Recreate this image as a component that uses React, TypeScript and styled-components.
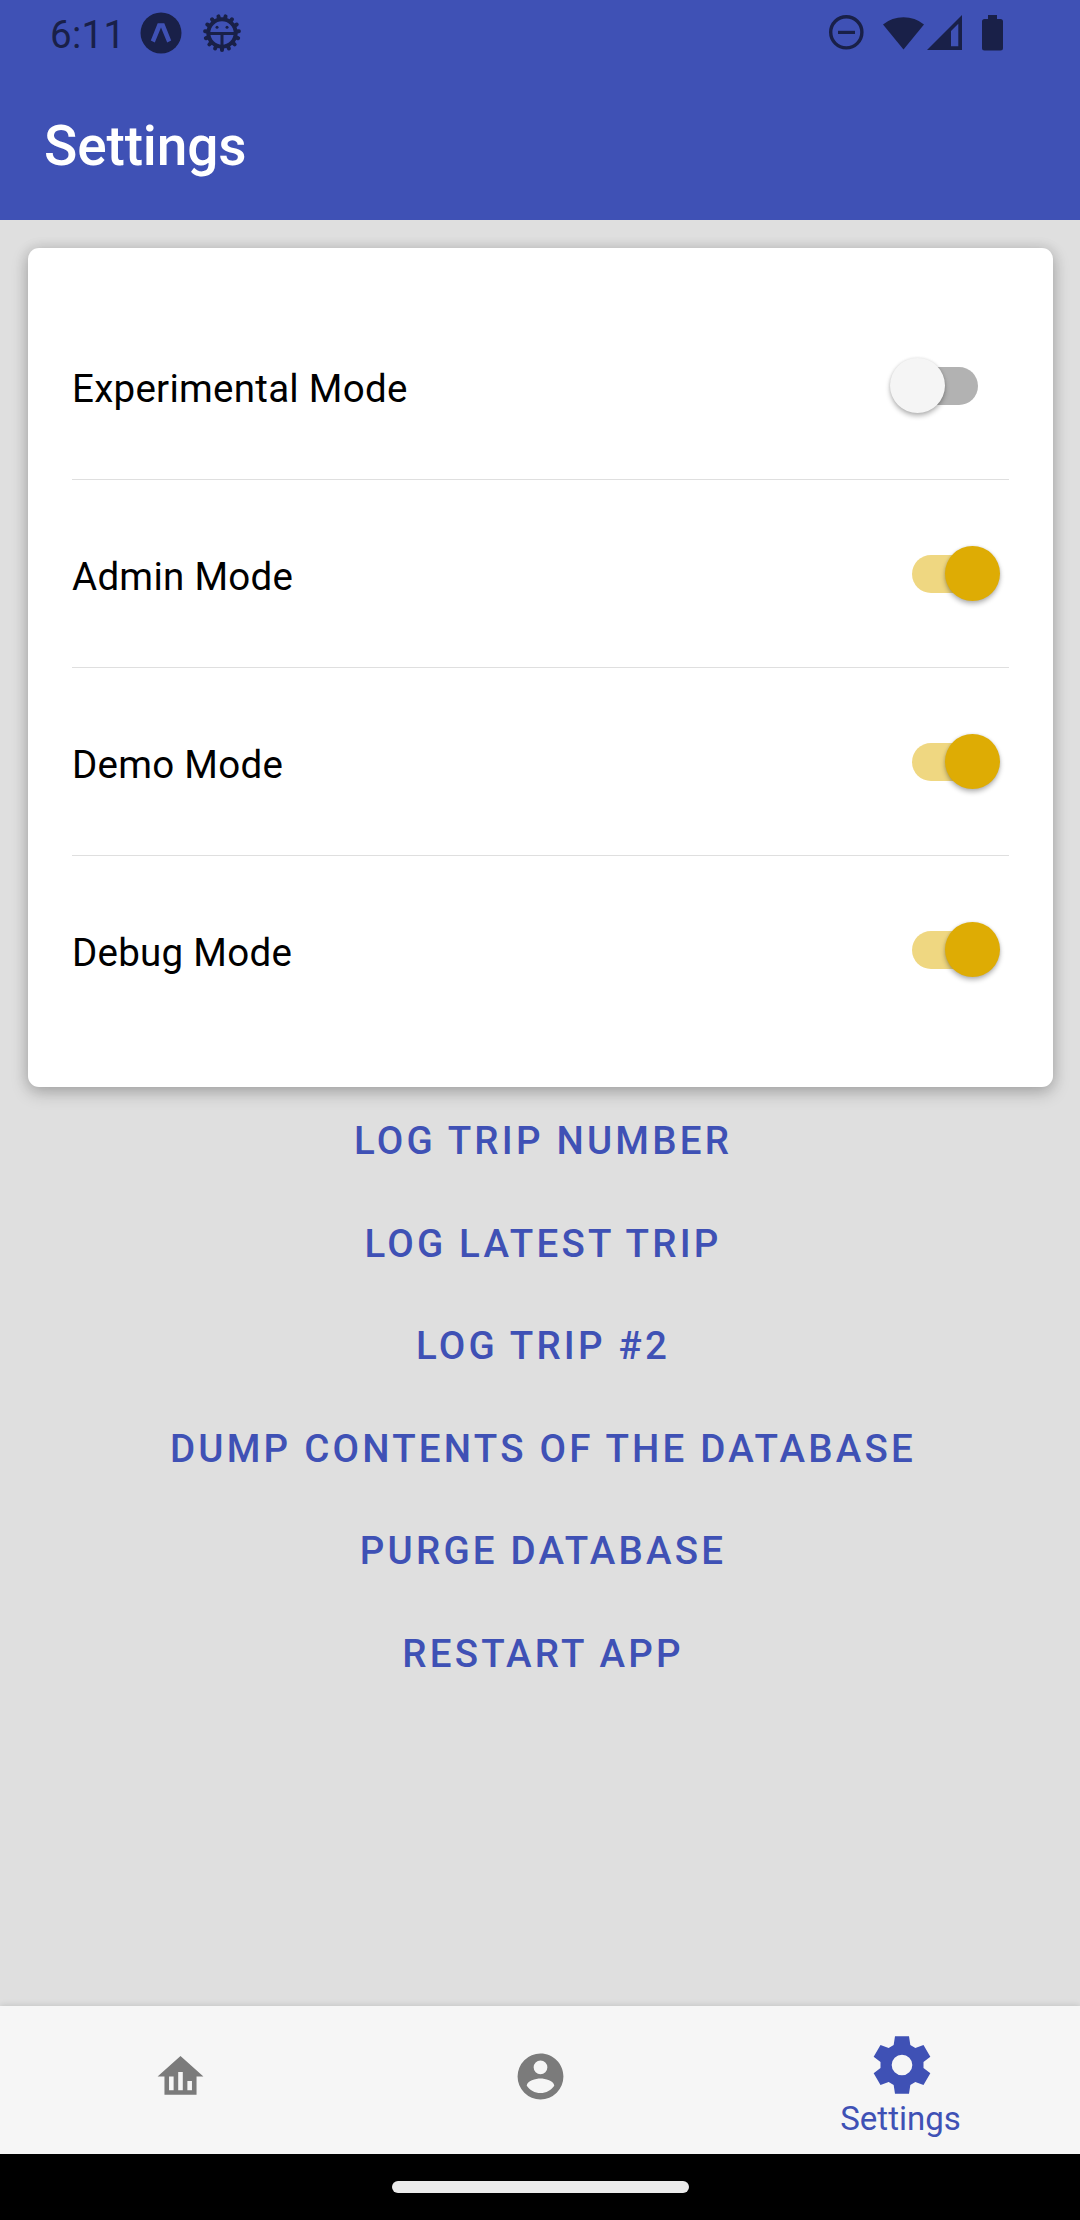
import React, { useState } from "react";
import styled, { createGlobalStyle } from "styled-components";

const INK = "#192048";
const PRIMARY = "#3f51b5";

const GlobalStyle = createGlobalStyle`
  * { box-sizing: border-box; }
  body { margin: 0; font-family: Roboto, "Noto Sans", sans-serif; }
  button { font: inherit; border: 0; padding: 0; background: none; cursor: pointer; }
  svg { display: block; }
`;

const Screen = styled.div`
  display: flex;
  flex-direction: column;
  width: 1080px;
  height: 2220px;
  background: #dfdfdf;
  overflow: hidden;
`;

const StatusBar = styled.div`
  display: flex;
  justify-content: space-between;
  height: 66px;
  padding: 0 76px 0 50px;
  background: ${PRIMARY};
  color: ${INK};
`;

const StatusGroup = styled.div`
  display: flex;
  align-items: center;
  gap: 20px;
  height: 66px;
`;

const Clock = styled.span`
  width: 70px;
  font-size: 38.5px;
  line-height: 46px;
  padding-top: 3px;
  letter-spacing: 0.3px;
`;

const Header = styled.header`
  display: flex;
  align-items: center;
  height: 154px;
  padding: 5px 44px 0;
  background: ${PRIMARY};
`;

const Title = styled.h1`
  margin: 0;
  color: #fff;
  font-size: 55px;
  font-weight: 500;
  line-height: 64px;
  letter-spacing: -0.15px;
`;

const Content = styled.main`
  display: flex;
  flex: 1;
  flex-direction: column;
  padding: 28px 27px 0 28px;
`;

const Card = styled.section`
  height: 839px;
  padding: 44px;
  border-radius: 11px;
  background: #fff;
  box-shadow: 0 6px 18px rgba(0, 0, 0, 0.2), 0 1px 14px rgba(0, 0, 0, 0.14);
`;

const SettingRow = styled.div`
  display: flex;
  align-items: center;
  justify-content: space-between;
  height: 188px;
  padding-right: 9px;
  border-bottom: 1px solid #dfdfdf;
  &:last-child { border-bottom-color: transparent; }
`;

const SettingLabel = styled.span`
  padding-top: 6px;
  color: #000;
  font-size: 38.5px;
  line-height: 46px;
  letter-spacing: 0.27px;
`;

const Toggle = styled.button<{ $on: boolean }>`
  display: flex;
  align-items: center;
  justify-content: ${(p) => (p.$on ? "flex-end" : "flex-start")};
  width: 110px;
  height: 55px;
  position: relative;
  &::before {
    content: "";
    position: absolute;
    left: 22px;
    top: 9px;
    width: 66px;
    height: 38px;
    border-radius: 19px;
    background: ${(p) => (p.$on ? "#efd781" : "#b2b2b2")};
  }
`;

const Thumb = styled.span<{ $on: boolean }>`
  position: relative;
  width: 55px;
  height: 55px;
  border-radius: 50%;
  background: ${(p) => (p.$on ? "#deac04" : "#f5f5f5")};
  box-shadow: 0 3px 5px rgba(0, 0, 0, 0.28), 0 0 3px rgba(0, 0, 0, 0.1);
`;

const Actions = styled.div`
  display: flex;
  flex-direction: column;
  align-items: center;
  padding-top: 3px;
`;

const Action = styled.button`
  height: 102.5px;
  padding-left: 5px;
  color: ${PRIMARY};
  font-size: 38.5px;
  font-weight: 500;
  letter-spacing: 3.2px;
  line-height: 102px;
  text-transform: uppercase;
`;

const TabBar = styled.nav`
  display: grid;
  grid-template-columns: repeat(3, 1fr);
  height: 148px;
  background: #f6f6f6;
  box-shadow: 0 -1px 6px rgba(0, 0, 0, 0.12);
`;

const Tab = styled.button<{ $active?: boolean }>`
  display: flex;
  flex-direction: column;
  align-items: center;
  justify-content: ${(p) => (p.$active ? "flex-start" : "center")};
  padding: ${(p) => (p.$active ? "29px 0 0 1px" : "0 0 8px 1px")};
  color: ${(p) => (p.$active ? PRIMARY : "#7b7b7b")};
`;

const TabLabel = styled.span`
  margin-top: 5px;
  font-size: 33px;
  line-height: 38px;
`;

const Gear = styled.svg`
  margin-left: 2px;
`;

const GestureBar = styled.div`
  display: flex;
  align-items: center;
  justify-content: center;
  height: 66px;
  background: #000;
`;

const Handle = styled.div`
  width: 297px;
  height: 12px;
  border-radius: 6px;
  background: #ebebeb;
`;

const BadgeIcon = () => (
  <svg width="42" height="42" viewBox="0 0 42 42">
    <circle cx="21" cy="21" r="20.5" fill={INK} />
    <path d="M17.700 11.200H24.300L31.200 28.600L27.200 30.500L21 15.500L14.800 30.500L10.800 28.600Z" fill={PRIMARY} />
  </svg>
);

const DebugIcon = () => {
  const teeth = Array.from({ length: 15 }, (_, i) => 90 + i * 24);
  return (
    <svg width="40" height="40" viewBox="-20 -20 40 40" fill="none" stroke={INK}>
      <circle r="13.700" strokeWidth="4" />
      {teeth.map((a) => (
        <path key={a} d="M15 0H17" strokeWidth="4" strokeLinecap="round" transform={`rotate(${a})`} />
      ))}
      <path d="M-13 .5H13M0 1V14" strokeWidth="3" />
      <circle cx="-5" cy="-5.700" r="1.500" fill={INK} stroke="none" />
      <circle cx="5" cy="-5.700" r="1.500" fill={INK} stroke="none" />
    </svg>
  );
};

const SystemIcons = () => (
  <svg width="176" height="66" viewBox="828 0 176 66" fill={INK}>
    <circle cx="846.3" cy="32.3" r="15.6" fill="none" stroke={INK} strokeWidth="3.4" />
    <rect x="838" y="30.8" width="17" height="3.2" />
    <path d="M903.5 49.5L883 24.5A33 33 0 0 1 924 24.5Z" />
    <path fillRule="evenodd" d="M927 50L962 15V50ZM951 31V46.3H958.3V23.7Z" />
    <path d="M988 15H997V19H1000.500Q1003 19 1003 21.500V48Q1003 50.500 1000.500 50.500H984.500Q982 50.500 982 48V21.500Q982 19 984.500 19H988Z" />
  </svg>
);

const HomeAnalyticsIcon = () => (
  <svg width="55" height="55" viewBox="0 0 24 24" fill="currentColor">
    <path d="M12 3L2 12H5V20H19V12H22L12 3M9 18H7V12H9V18M13 18H11V10H13V18M17 18H15V14H17V18Z" />
  </svg>
);

const AccountIcon = () => (
  <svg width="55" height="55" viewBox="0 0 24 24" fill="currentColor">
    <path d="M12 19.200C9.500 19.200 7.290 17.920 6 16C6.030 14 10 12.900 12 12.900S17.970 14 18 16C16.710 17.920 14.500 19.200 12 19.200M12 5A3 3 0 0 1 15 8A3 3 0 0 1 12 11A3 3 0 0 1 9 8A3 3 0 0 1 12 5M12 2A10 10 0 0 0 2 12A10 10 0 0 0 12 22A10 10 0 0 0 22 12C22 6.470 17.500 2 12 2Z" />
  </svg>
);

const GearIcon = () => (
  <Gear width="60" height="60" viewBox="-90 -90 180 180" fill="currentColor">
    <path
      fillRule="evenodd"
      d="M-21 -86H21L25 -60L40 -51L64.500 -60L85 -25L64.500 -9V9L85 25L64.500 60L40 51L25 60L21 86H-21L-25 60L-40 51L-64.500 60L-85 25L-64.500 9V-9L-85 -25L-64.500 -60L-40 -51L-25 -60ZM0 -31A31 31 0 1 0 0 31A31 31 0 1 0 0 -31Z"
    />
  </Gear>
);

const actions = [
  "Log trip number",
  "Log latest trip",
  "Log trip #2",
  "Dump contents of the database",
  "Purge database",
  "Restart app",
];

function Setting({ label, initial }: { label: string; initial: boolean }) {
  const [on, setOn] = useState(initial);
  return (
    <SettingRow>
      <SettingLabel>{label}</SettingLabel>
      <Toggle $on={on} role="switch" aria-checked={on} aria-label={label} onClick={() => setOn(!on)}>
        <Thumb $on={on} />
      </Toggle>
    </SettingRow>
  );
}

export default function App() {
  return (
    <Screen>
      <GlobalStyle />
      <StatusBar>
        <StatusGroup>
          <Clock>6:11</Clock>
          <BadgeIcon />
          <DebugIcon />
        </StatusGroup>
        <SystemIcons />
      </StatusBar>
      <Header>
        <Title>Settings</Title>
      </Header>
      <Content>
        <Card>
          <Setting label="Experimental Mode" initial={false} />
          <Setting label="Admin Mode" initial />
          <Setting label="Demo Mode" initial />
          <Setting label="Debug Mode" initial />
        </Card>
        <Actions>
          {actions.map((a) => (
            <Action key={a}>{a}</Action>
          ))}
        </Actions>
      </Content>
      <TabBar>
        <Tab aria-label="Home">
          <HomeAnalyticsIcon />
        </Tab>
        <Tab aria-label="Account">
          <AccountIcon />
        </Tab>
        <Tab $active>
          <GearIcon />
          <TabLabel>Settings</TabLabel>
        </Tab>
      </TabBar>
      <GestureBar>
        <Handle />
      </GestureBar>
    </Screen>
  );
}
